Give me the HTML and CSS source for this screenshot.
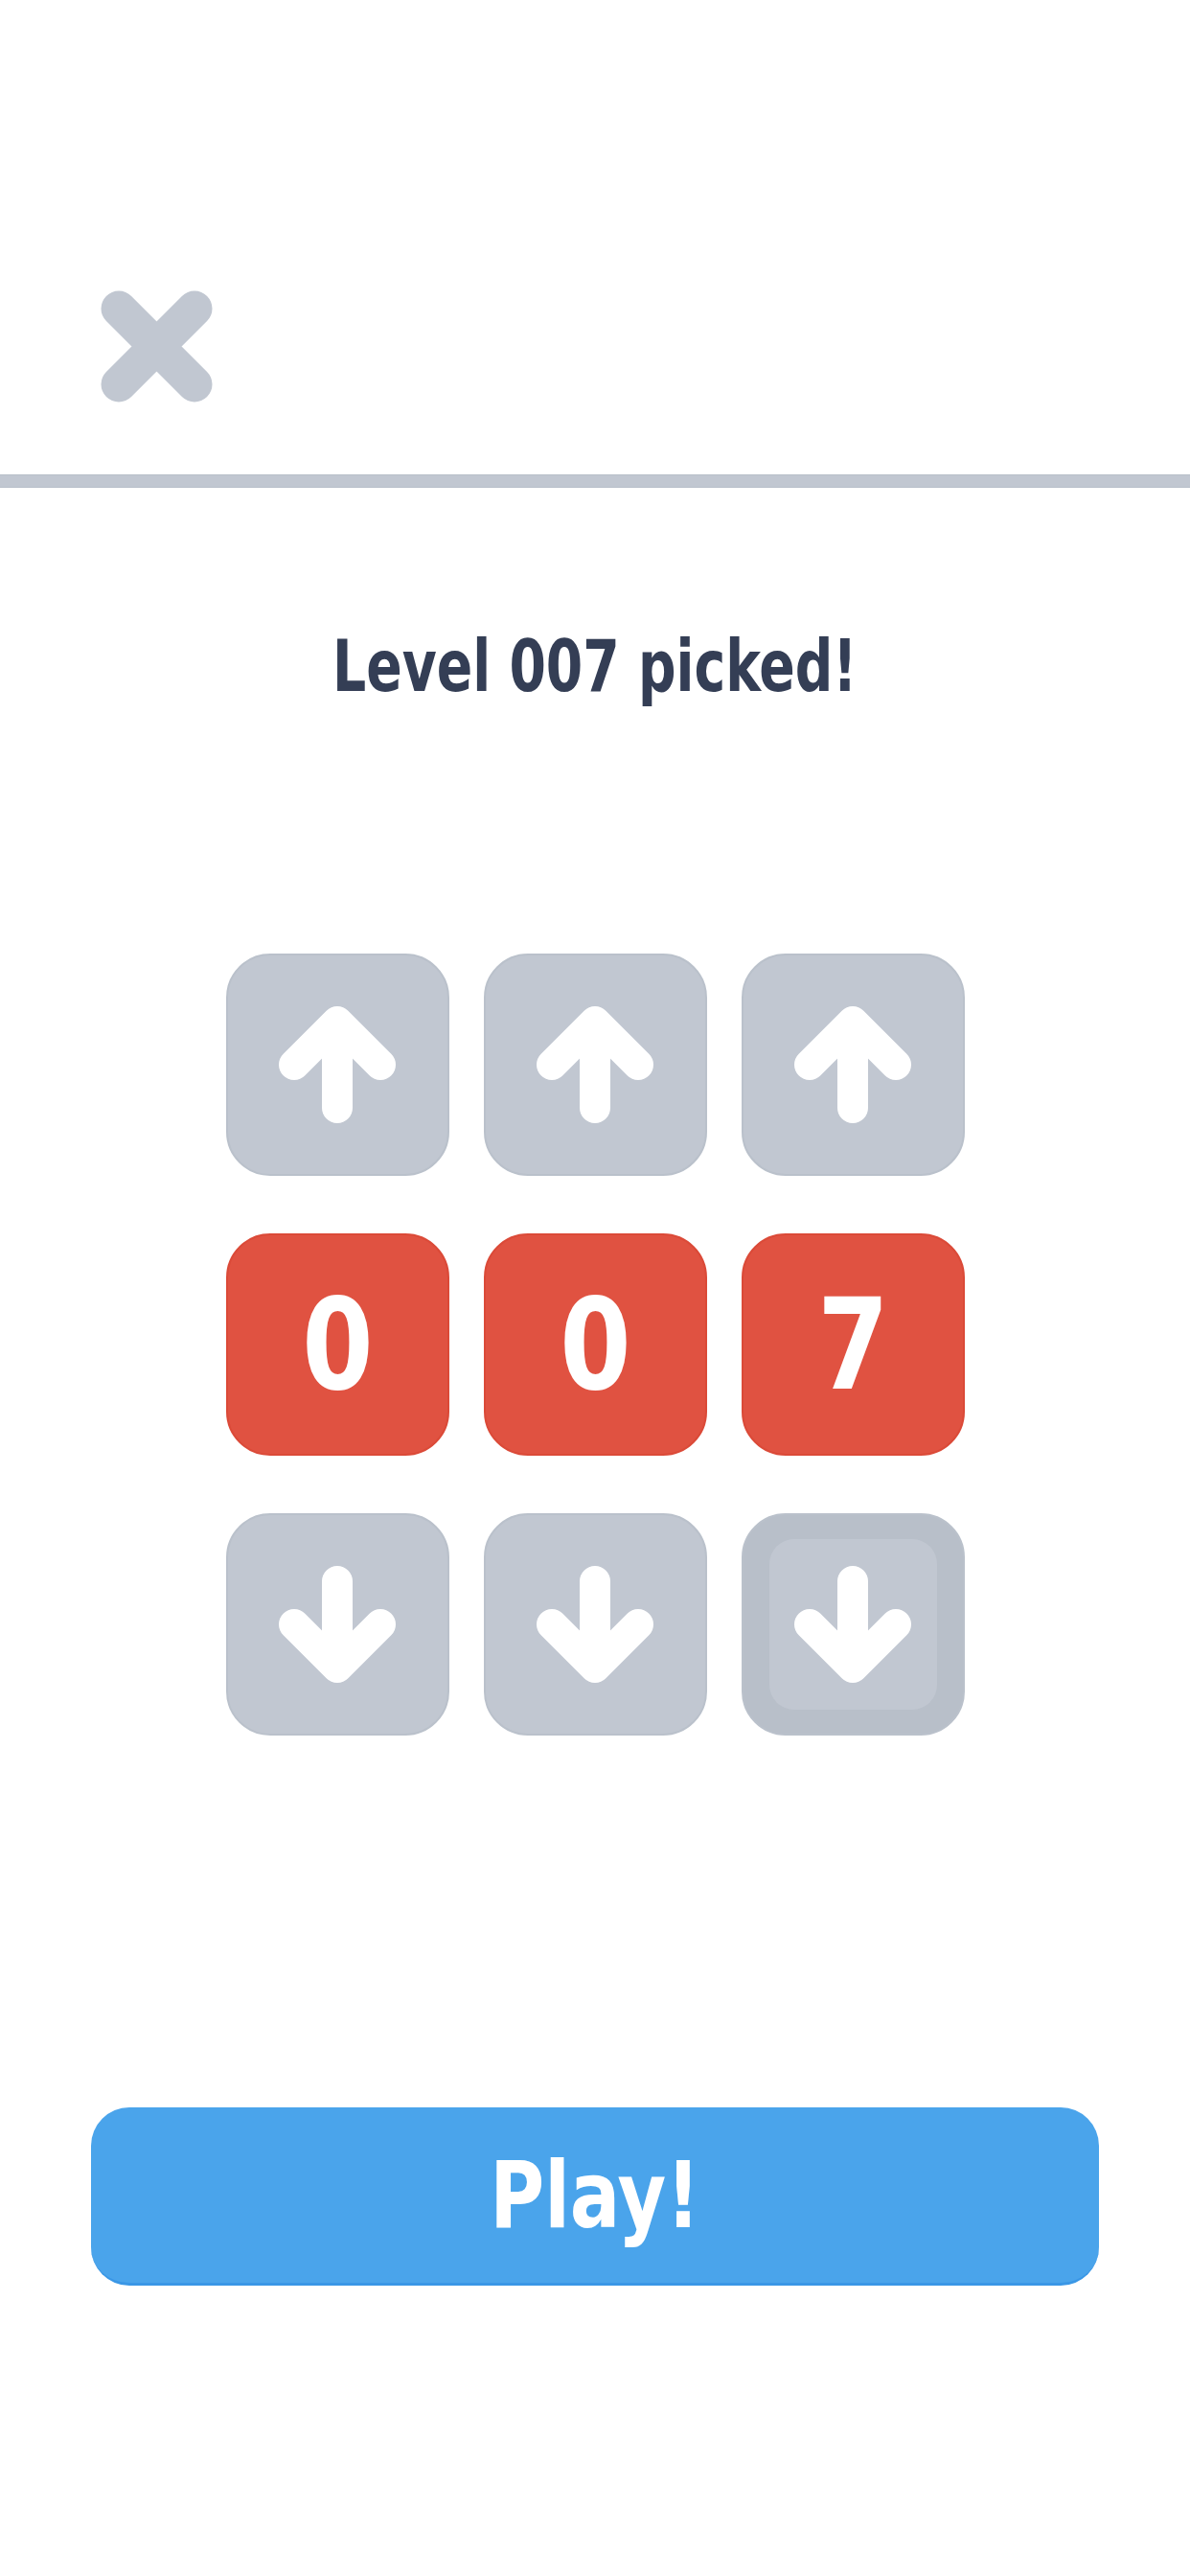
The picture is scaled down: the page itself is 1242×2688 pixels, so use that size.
FILE: index.html
```html
<!DOCTYPE html>
<html lang="en">
<head>
  <meta charset="UTF-8" />
  <meta name="viewport" content="width=device-width, initial-scale=1.0"/>
  <title>Pick a level</title>
  <link rel="stylesheet" href="styles.css">
</head>
<body>
  <div class="screen">
    <header class="top-bar">
      <button class="close-btn" aria-label="Close">
        <svg width="117" height="117" viewBox="0 0 117 117">
          <path d="M19 19 L98 98 M98 19 L19 98" stroke="#c1c7d1" stroke-width="37" stroke-linecap="round" fill="none"/>
        </svg>
      </button>
    </header>
    <div class="divider"></div>

    <h1 class="title"><span>Level 007 picked!</span></h1>

    <div class="picker">
      <button class="tile arrow up"><svg viewBox="0 0 122 122"><path d="M61 106 V16 M16 61 L61 16 L106 61"/></svg></button>
      <button class="tile arrow up"><svg viewBox="0 0 122 122"><path d="M61 106 V16 M16 61 L61 16 L106 61"/></svg></button>
      <button class="tile arrow up"><svg viewBox="0 0 122 122"><path d="M61 106 V16 M16 61 L61 16 L106 61"/></svg></button>

      <div class="tile digit"><span>0</span></div>
      <div class="tile digit"><span>0</span></div>
      <div class="tile digit"><span>7</span></div>

      <button class="tile arrow down"><svg viewBox="0 0 122 122"><path d="M61 16 V106 M16 61 L61 106 L106 61"/></svg></button>
      <button class="tile arrow down"><svg viewBox="0 0 122 122"><path d="M61 16 V106 M16 61 L61 106 L106 61"/></svg></button>
      <button class="tile arrow down pressed"><span class="inner"><svg viewBox="0 0 122 122"><path d="M61 16 V106 M16 61 L61 106 L106 61"/></svg></span></button>
    </div>

    <button class="play-btn"><span>Play!</span></button>
  </div>
</body>
</html>
```

FILE: styles.css
```css
body {
  margin: 0;
  padding: 0;
  background-color: #ffffff;
  font-family: "DejaVu Sans", "Noto Sans", sans-serif;
  font-stretch: condensed;
  font-weight: bold;
}
button {
  font: inherit;
  border: none;
  padding: 0;
  background: none;
  cursor: pointer;
}
.screen {
  width: 1242px;
  min-height: 2688px;
  display: flex;
  flex-direction: column;
}
.top-bar {
  height: 495px;
  box-sizing: border-box;
  padding: 303px 0 0 105px;
}
.close-btn {
  display: block;
  width: 117px;
  height: 117px;
}
.close-btn svg {
  display: block;
}
.divider {
  height: 14px;
  box-sizing: border-box;
  background: #c1c7d1;
  border-top: 1px solid #b8bfc9;
  border-bottom: 1px solid #b8bfc9;
}
.title {
  margin: 149px 0 0;
  text-align: center;
  font-size: 74px;
  line-height: 74px;
  font-weight: bold;
  color: #343e55;
}
.title span {
  display: inline-block;
  transform: scaleX(0.83);
}
.picker {
  margin: 263px auto 0;
  display: grid;
  grid-template-columns: repeat(3, 233px);
  grid-auto-rows: 232px;
  column-gap: 36px;
  row-gap: 60px;
}
.tile {
  box-sizing: border-box;
  border-radius: 46px;
  display: flex;
  align-items: center;
  justify-content: center;
}
.arrow {
  background: #c1c7d1;
  border: 2px solid #bac1cb;
}
.arrow svg {
  width: 122px;
  height: 122px;
  display: block;
}
.arrow path {
  fill: none;
  stroke: #ffffff;
  stroke-width: 32;
  stroke-linecap: round;
  stroke-linejoin: round;
}
.arrow.pressed {
  background: #b8bfc9;
}
.pressed .inner {
  width: 175px;
  height: 178px;
  border-radius: 26px;
  background: #c1c7d1;
  display: flex;
  align-items: center;
  justify-content: center;
}
.digit {
  background: #e05241;
  border: 2px solid #db4a38;
  color: #ffffff;
  font-size: 132px;
  line-height: 1;
}
.digit span {
  display: inline-block;
  transform: scaleX(0.9);
}
.play-btn {
  margin: 388px 95px 0;
  height: 186px;
  box-sizing: border-box;
  border-radius: 40px;
  background: #4aa4eb;
  border-bottom: 3px solid #3a97e6;
  color: #ffffff;
  font-size: 96px;
  line-height: 1;
  display: flex;
  align-items: center;
  justify-content: center;
}
.play-btn span {
  display: inline-block;
  transform: scaleX(0.9);
}
```
